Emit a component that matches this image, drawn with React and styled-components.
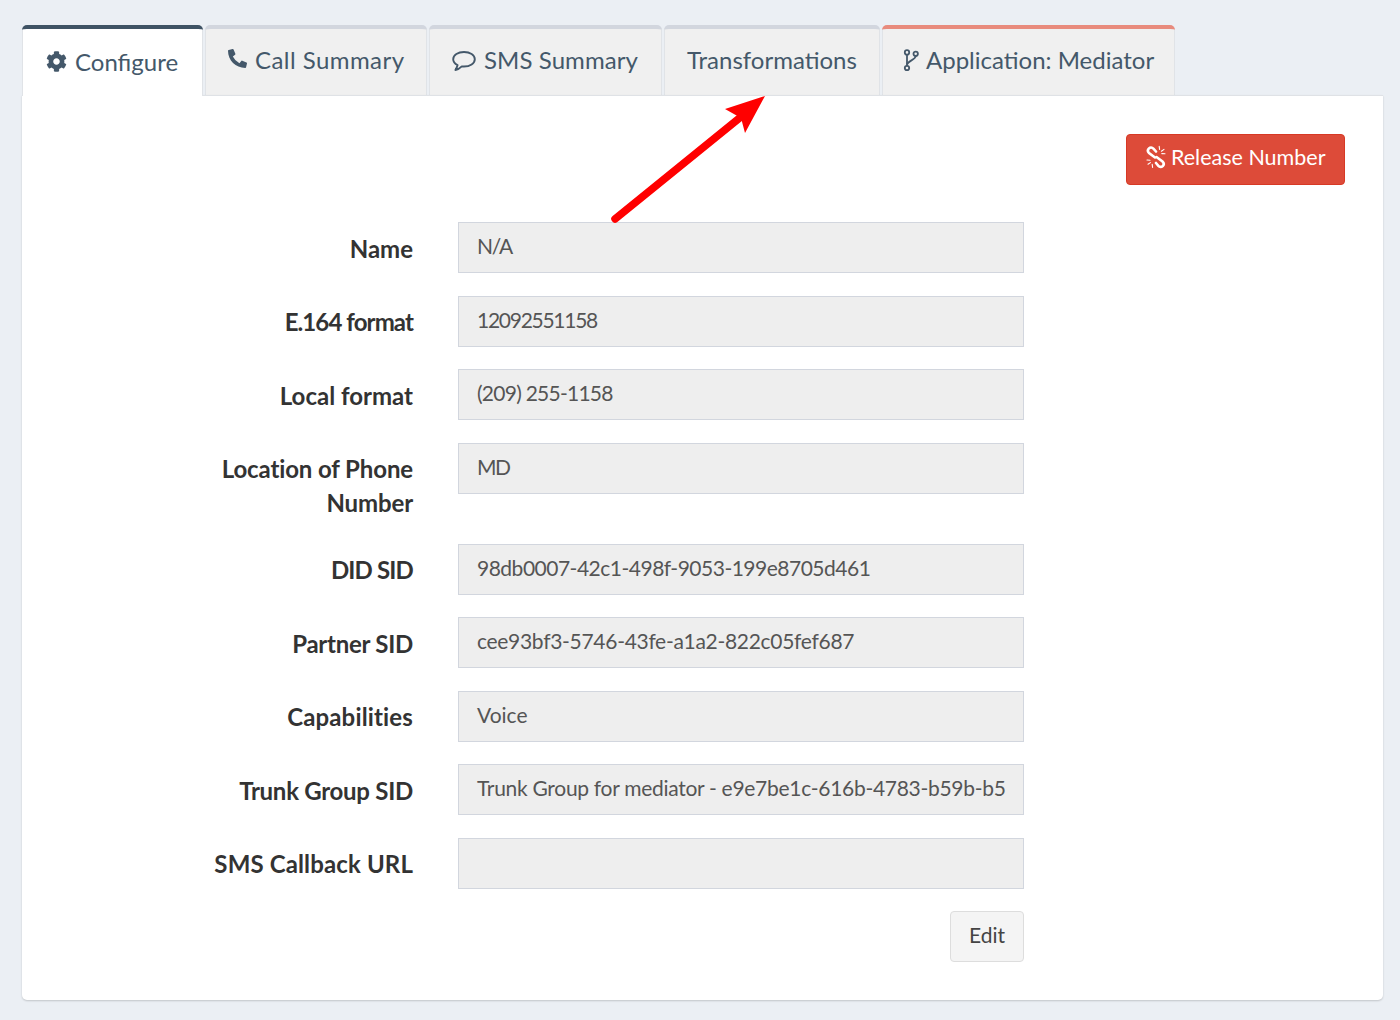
import React from 'react';
import styled, { createGlobalStyle } from 'styled-components';
import { FaCog, FaPhoneAlt } from 'react-icons/fa';

const GlobalStyle = createGlobalStyle`
    html, body {
        margin: 0;
        padding: 0;
        background: #ebeff4;
    }
    body {
        font-family: "Lato", "Liberation Sans", sans-serif;
    }
`;

const Page = styled.div`
    width: 1400px;
    height: 1020px;
    padding: 25px 17px 0 22px;
    box-sizing: border-box;
`;

const TabBar = styled.div`
    display: flex;
    height: 70px;
    gap: 2px;
`;

const Tab = styled.div`
    width: ${p => p.$width}px;
    box-sizing: border-box;
    display: flex;
    align-items: flex-start;
    gap: 6px;
    border-top: 4px solid ${p => p.$accent};
    border-radius: 5px 5px 0 0;
    box-shadow: inset 1px 0 0 #e0e3e7, inset -1px 0 0 #e0e3e7;
    padding: ${p => (p.$active ? 17 : 15)}px 0 0 ${p => p.$pad}px;
    background: ${p => (p.$active ? '#fff' : '#f0f0f0')};
    color: #44586a;
    font-size: 24px;
    line-height: 32px;
    letter-spacing: ${p => p.$spacing || 0}px;
    white-space: nowrap;
    position: relative;
    z-index: ${p => (p.$active ? 1 : 0)};
    margin-bottom: ${p => (p.$active ? '-1px' : '0')};
    svg {
        flex: none;
    }
`;

const Panel = styled.div`
    position: relative;
    height: 905px;
    box-sizing: border-box;
    background: #fff;
    border-top: 1px solid #dfe2e6;
    border-radius: 0 0 5px 5px;
    box-shadow: 0 1px 2px rgba(0, 0, 0, 0.18);
    padding: 38px 38px 0 0;
`;

const Actions = styled.div`
    display: flex;
    justify-content: flex-end;
    margin-bottom: 37px;
`;

const DangerButton = styled.div`
    height: 51px;
    width: 219px;
    box-sizing: border-box;
    display: flex;
    align-items: center;
    gap: 5px;
    padding: 0 0 6px 19px;
    background: #dd4b39;
    border: 1px solid #d73925;
    border-radius: 4px;
    color: #fff;
    font-size: 21.5px;
`;

const Row = styled.div`
    display: grid;
    grid-template-columns: 391px 566px;
    column-gap: 45px;
    margin-bottom: 22.5px;
`;

const Label = styled.div`
    text-align: right;
    font-weight: 700;
    font-size: 24px;
    line-height: 34px;
    padding: 9.5px 0 1.2px;
    letter-spacing: ${p => p.$spacing || 0}px;
    color: #333;
`;

const Field = styled.div`
    height: 51px;
    box-sizing: border-box;
    padding: 0 10px 0 18px;
    background: #eee;
    border: 1px solid #d2d6de;
    color: #555;
    font-size: 21px;
    line-height: 46px;
    letter-spacing: ${p => p.$spacing || 0}px;
    white-space: nowrap;
    overflow: hidden;
`;

const EditRow = styled.div`
    width: 1002px;
    display: flex;
    justify-content: flex-end;
`;

const EditButton = styled.div`
    width: 74px;
    height: 51px;
    box-sizing: border-box;
    text-align: center;
    background: #f4f4f4;
    border: 1px solid #ddd;
    border-radius: 4px;
    color: #444;
    font-size: 21px;
    line-height: 46px;
`;

const ArrowOverlay = styled.svg`
    position: absolute;
    left: 0;
    top: 0;
    pointer-events: none;
    overflow: visible;
`;

const CommentIcon = () => (
    <svg width="24" height="23" viewBox="0 0 24 23" fill="none" stroke="#44586a" strokeWidth="1.9" style={{ marginTop: 6, marginRight: 2 }}>
        <path d="M12 2C6 2 1.2 5 1.2 9.2C1.2 11.6 3 13.8 5.6 15C5.2 16.6 4.4 18.4 3.4 20C5.8 19.6 8 18.2 9.8 16.4C10.5 16.5 11.2 16.5 12 16.5C18 16.5 22.8 13.4 22.8 9.2C22.8 5 18 2 12 2Z" strokeLinejoin="round" />
    </svg>
);

const BranchIcon = () => (
    <svg width="17" height="23" viewBox="0 0 17 23" fill="none" stroke="#44586a" strokeWidth="1.8" style={{ marginTop: 5 }}>
        <circle cx="4" cy="3.4" r="2.2" />
        <circle cx="12.7" cy="4.8" r="2.2" />
        <circle cx="4" cy="19" r="2.2" />
        <path d="M4 5.6V16.8" />
        <path d="M12.7 7C12.5 11 5 11.5 4 15.5" />
    </svg>
);

const BrokenLinkIcon = () => (
    <svg width="20" height="24" viewBox="0 0 20 24" fill="none" stroke="#fff" strokeLinecap="round">
        <path d="M10 6.5L7.4 3.6C6 2.2 4.2 2.2 3 3.4C1.6 4.8 1.6 6.6 3 8L9 12.5" strokeWidth="2.6" />
        <path d="M10.5 12L16.5 16.5C18 18 18 19.8 16.8 21C15.4 22.2 13.6 22.2 12.4 20.8L10 18" strokeWidth="2.6" />
        <path d="M13.2 1.4L13.6 4.4M15.4 6.2L18 4.4M15.8 8.6L19 8.8M6.6 22.4L6.2 19.4M4.4 17.6L2 19.2M4 15.2L1 15" strokeWidth="1.1" />
    </svg>
);

const tabs = [
    { label: 'Configure', width: 181, pad: 24, accent: '#3f5364', active: true, icon: <FaCog size={21} style={{ marginTop: 5, marginRight: 2 }} /> },
    { label: 'Call Summary', width: 222, pad: 23, spacing: 0.45, accent: '#d2d6de', icon: <FaPhoneAlt size={19} style={{ marginTop: 5, marginRight: 2 }} /> },
    { label: 'SMS Summary', width: 233, pad: 23, spacing: 0.08, accent: '#d2d6de', icon: <CommentIcon /> },
    { label: 'Transformations', width: 216, pad: 23, accent: '#d2d6de' },
    { label: 'Application: Mediator', width: 293, pad: 21, accent: '#e88b7d', icon: <BranchIcon /> },
];

const rows = [
    { label: 'Name', value: 'N/A', valueSpacing: -1.2 },
    { label: 'E.164 format', labelSpacing: -0.9, value: '12092551158', valueSpacing: -1.27 },
    { label: 'Local format', value: '(209) 255-1158', valueSpacing: -0.75 },
    { label: <>Location of Phone<br />Number</>, labelSpacing: -0.12, value: 'MD', valueSpacing: -1.5 },
    { label: 'DID SID', labelSpacing: -0.85, value: '98db0007-42c1-498f-9053-199e8705d461', valueSpacing: -0.5 },
    { label: 'Partner SID', labelSpacing: -0.27, value: 'cee93bf3-5746-43fe-a1a2-822c05fef687', valueSpacing: -0.3 },
    { label: 'Capabilities', labelSpacing: 0.15, value: 'Voice' },
    { label: 'Trunk Group SID', labelSpacing: -0.27, value: 'Trunk Group for mediator - e9e7be1c-616b-4783-b59b-b5', valueSpacing: -0.29 },
    { label: 'SMS Callback URL', labelSpacing: 0.13, value: '' },
];

const App = () => (
    <Page>
        <GlobalStyle />
        <TabBar>
            {tabs.map(tab => (
                <Tab
                    key={tab.label}
                    $width={tab.width}
                    $pad={tab.pad}
                    $spacing={tab.spacing}
                    $accent={tab.accent}
                    $active={tab.active}
                >
                    {tab.icon}
                    {tab.label}
                </Tab>
            ))}
        </TabBar>
        <Panel>
            <Actions>
                <DangerButton>
                    <BrokenLinkIcon />
                    Release Number
                </DangerButton>
            </Actions>
            {rows.map((row, i) => (
                <Row key={i}>
                    <Label $spacing={row.labelSpacing}>{row.label}</Label>
                    <Field $spacing={row.valueSpacing}>{row.value}</Field>
                </Row>
            ))}
            <EditRow>
                <EditButton>Edit</EditButton>
            </EditRow>
            <ArrowOverlay width="1361" height="200">
                <path d="M593 123L720 20" stroke="#ff0000" strokeWidth="7.5" strokeLinecap="round" fill="none" />
                <path d="M743 0L703 13L719 22L723 37Z" fill="#ff0000" />
            </ArrowOverlay>
        </Panel>
    </Page>
);

export default App;
